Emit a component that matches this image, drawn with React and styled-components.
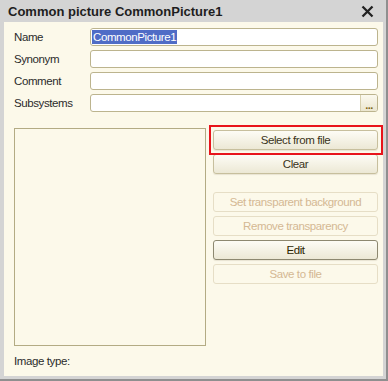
import React from 'react'
import styled, { createGlobalStyle } from 'styled-components'

const Global = createGlobalStyle`
  html, body {
    margin: 0;
    padding: 0;
    background: #c9c9c9;
  }
  body {
    font-family: "Liberation Sans", Arial, sans-serif;
    font-size: 11.5px;
    letter-spacing: -0.4px;
    color: #2b2b2b;
  }
`

const Window = styled.div`
  width: 388px;
  height: 381px;
  box-sizing: border-box;
  display: flex;
  flex-direction: column;
  background: #d4d4d4;
  border-right: 2px solid #8f8f8f;
  border-bottom: 2px solid #8f8f8f;
  padding: 0 3px 3px 4px;
`

const TitleBar = styled.div`
  height: 22px;
  display: flex;
  align-items: center;
  justify-content: space-between;
  padding: 0 9px 0 4px;
  font-weight: bold;
  font-size: 13px;
  letter-spacing: 0;
  color: #1e1e1e;
`

const Body = styled.div`
  flex: 1;
  background: #fcf9ea;
  padding: 6px 5px 0 10px;
  display: flex;
  flex-direction: column;
`

const Row = styled.div`
  display: flex;
  align-items: center;
  height: 18px;
  margin-bottom: 4px;
`

const Label = styled.div`
  width: 76px;
  flex: none;
`

const Field = styled.div`
  flex: 1;
  height: 18px;
  box-sizing: border-box;
  border: 1px solid #bcb48e;
  border-radius: 3px;
  background: #fff;
  display: flex;
  align-items: center;
  padding-left: 1px;
  overflow: hidden;
`

const Selected = styled.span`
  background: #4f6cc6;
  color: #fff;
  line-height: 14px;
  padding: 0 1px;
`

const Spacer = styled.div`
  flex: 1;
`

const DotsButton = styled.div`
  width: 16px;
  height: 100%;
  border-left: 1px solid #d6cfae;
  background: linear-gradient(#fbf9ef, #ebe6cf);
  color: #7d6414;
  font-weight: bold;
  font-size: 11px;
  display: flex;
  align-items: flex-end;
  justify-content: center;
  line-height: 12px;
  letter-spacing: -0.5px;
`

const Main = styled.div`
  display: flex;
  gap: 7px;
  margin-top: 12px;
`

const PictureBox = styled.div`
  width: 192px;
  height: 218px;
  box-sizing: border-box;
  border: 1px solid #b3ab84;
  flex: none;
`

const Buttons = styled.div`
  flex: 1;
  display: flex;
  flex-direction: column;
  gap: 4px;
  padding-top: 2px;
`

const Button = styled.div`
  height: 20px;
  box-sizing: border-box;
  border-radius: 3px;
  border: 1px solid ${p => (p.$disabled ? '#e6dec6' : p.$focused ? '#8d8870' : '#c7bf9d')};
  background: ${p =>
    p.$disabled ? '#fcf9ea' : 'linear-gradient(#fdfcf5, #ece8d5)'};
  color: ${p => (p.$disabled ? '#d4b893' : p.$focused ? '#2e2700' : '#3a3320')};
  display: flex;
  align-items: center;
  justify-content: center;
  margin-top: ${p => p.$gap || 0}px;
  box-shadow: ${p => (p.$disabled ? 'none' : '0 1px 1px rgba(120,110,80,0.15)')};
`

const Highlight = styled.div`
  position: relative;
  &::after {
    content: '';
    position: absolute;
    left: -4px;
    right: -5px;
    top: -5px;
    bottom: -5px;
    border: 2px solid #e8141b;
  }
`

const Footer = styled.div`
  margin-top: 9px;
`

const CloseIcon = () => (
  <svg width="13" height="13" viewBox="0 0 13 13">
    <path d="M1.5 1.5 L11.5 11.5 M11.5 1.5 L1.5 11.5" stroke="#222" strokeWidth="2.3" />
  </svg>
)

export default function App() {
  return (
    <>
      <Global />
      <Window>
        <TitleBar>
          <span>Common picture CommonPicture1</span>
          <CloseIcon />
        </TitleBar>
        <Body>
          <Row>
            <Label>Name</Label>
            <Field>
              <Selected>CommonPicture1</Selected>
            </Field>
          </Row>
          <Row>
            <Label>Synonym</Label>
            <Field />
          </Row>
          <Row>
            <Label>Comment</Label>
            <Field />
          </Row>
          <Row>
            <Label>Subsystems</Label>
            <Field>
              <Spacer />
              <DotsButton>...</DotsButton>
            </Field>
          </Row>
          <Main>
            <PictureBox />
            <Buttons>
              <Highlight>
                <Button>Select from file</Button>
              </Highlight>
              <Button>Clear</Button>
              <Button $disabled $gap={14}>Set transparent background</Button>
              <Button $disabled>Remove transparency</Button>
              <Button $focused>Edit</Button>
              <Button $disabled>Save to file</Button>
            </Buttons>
          </Main>
          <Footer>Image type:</Footer>
        </Body>
      </Window>
    </>
  )
}
